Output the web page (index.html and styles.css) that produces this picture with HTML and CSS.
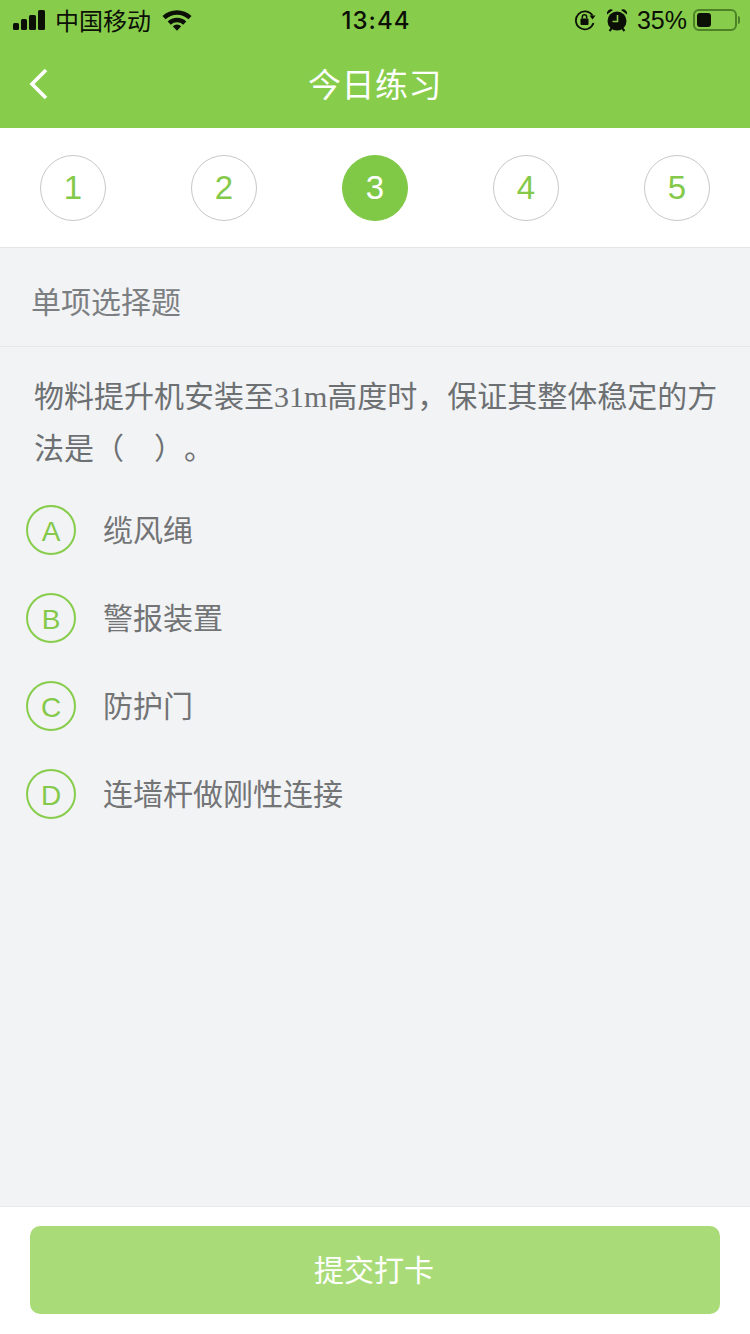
FILE: index.html
```html
<!DOCTYPE html>
<html>
<head>
    <title>今日练习</title>
    <link rel="stylesheet" href="styles.css">
</head>
<body>
    <div class="page">
        <div class="status-bar">
            <div class="status-left">
                <svg class="signal" width="34" height="20" viewBox="0 0 34 20">
                    <rect x="1" y="13" width="6" height="7" rx="1.500"/>
                    <rect x="9" y="9" width="6" height="11" rx="1.500"/>
                    <rect x="17" y="5" width="7" height="15" rx="1.500"/>
                    <rect x="26" y="0" width="7" height="20" rx="1.500"/>
                </svg>
                <span class="carrier">中国移动</span>
                <svg class="wifi" width="30" height="22" viewBox="0 0 30 22">
                    <path d="M0.500 7a21 21 0 0 1 29 0l-3 3.300a16.500 16.500 0 0 0-23 0z"/>
                    <path d="M5.700 12.500a13.500 13.500 0 0 1 18.600 0l-3.100 3.200a9 9 0 0 0-12.400 0z"/>
                    <path d="M10.800 17.200a6.200 6.200 0 0 1 8.400 0l-4.200 4.600z"/>
                </svg>
            </div>
            <div class="status-time">13:44</div>
            <div class="status-right">
                <svg class="rotate-lock" width="22" height="22" viewBox="0 0 22 22">
                    <path d="M18.500 6.500A9 9 0 1 0 19.500 14" fill="none" stroke="#0b0f06" stroke-width="1.800"/>
                    <path d="M15.500 6.500h6l-3 4z"/>
                    <rect x="6.500" y="9.500" width="8" height="6.500" rx="1"/>
                    <path d="M8.300 9.500V8a2.200 2.200 0 0 1 4.400 0v1.500" fill="none" stroke="#0b0f06" stroke-width="1.500"/>
                </svg>
                <svg class="alarm" width="22" height="24" viewBox="0 0 22 24">
                    <circle cx="11" cy="13" r="9.500"/>
                    <path d="M1 6.500a4 4 0 0 1 6-4.500zM21 6.500a4 4 0 0 0-6-4.500z"/>
                    <path d="M3.500 23l2.500-3M18.500 23l-2.500-3" stroke="#0b0f06" stroke-width="2"/>
                    <path d="M11.500 7v6.500H6.500" fill="none" stroke="#87cd4b" stroke-width="1.600"/>
                </svg>
                <span class="battery-text">35%</span>
                <div class="battery">
                    <div class="battery-level"></div>
                </div>
                <div class="battery-cap"></div>
            </div>
        </div>

        <div class="nav-bar">
            <svg class="back" width="20" height="32" viewBox="0 0 20 32">
                <path d="M17 2L3 16l14 14" fill="none" stroke="#fff" stroke-width="3.600"/>
            </svg>
            <h1 class="nav-title">今日练习</h1>
        </div>

        <div class="steps">
            <div class="step">1</div>
            <div class="step">2</div>
            <div class="step active">3</div>
            <div class="step">4</div>
            <div class="step">5</div>
        </div>

        <div class="content">
            <div class="section-title">单项选择题</div>
            <p class="question">物料提升机安装至<span class="latin">31m</span>高度时，保证其整体稳定的方法是（<span class="blank"></span>）。</p>
            <div class="options">
                <div class="option"><span class="option-key">A</span><span class="option-text">缆风绳</span></div>
                <div class="option"><span class="option-key">B</span><span class="option-text">警报装置</span></div>
                <div class="option"><span class="option-key">C</span><span class="option-text">防护门</span></div>
                <div class="option"><span class="option-key">D</span><span class="option-text">连墙杆做刚性连接</span></div>
            </div>
        </div>

        <div class="footer">
            <button class="submit-button">提交打卡</button>
        </div>
    </div>
</body>
</html>
```
FILE: styles.css
```css
* {
    box-sizing: border-box;
}
body {
    margin: 0;
    font-family: "Liberation Sans", "Noto Sans CJK SC", sans-serif;
}
.page {
    display: flex;
    flex-direction: column;
    width: 750px;
    height: 1334px;
    overflow: hidden;
    background-color: #f2f3f5;
}

/* status bar */
.status-bar {
    display: flex;
    align-items: center;
    justify-content: space-between;
    height: 40px;
    padding: 0 10px 0 12px;
    background-color: #87cd4b;
    color: #0b0f06;
    font-size: 25px;
}
.status-bar svg {
    fill: #0b0f06;
    flex-shrink: 0;
}
.status-left,
.status-right {
    display: flex;
    align-items: center;
    width: 240px;
}
.status-right {
    justify-content: flex-end;
}
.carrier {
    margin-left: 9px;
    font-family: "Noto Sans CJK SC", sans-serif;
    font-size: 24px;
    line-height: 40px;
}
.wifi {
    margin-left: 11px;
}
.status-time {
    font-family: "Inter", "Liberation Sans", sans-serif;
    font-size: 24px;
    font-weight: 500;
    letter-spacing: 1px;
}
.rotate-lock {
    margin-right: 10px;
}
.alarm {
    margin-right: 9px;
}
.battery-text {
    margin-right: 6px;
}
.battery {
    width: 44px;
    height: 22px;
    padding: 2px;
    border: 2px solid #4d8227;
    border-radius: 6px;
}
.battery-level {
    width: 14px;
    height: 100%;
    border-radius: 3px;
    background-color: #0b0f06;
}
.battery-cap {
    width: 2px;
    height: 8px;
    margin-left: 1px;
    border-radius: 0 2px 2px 0;
    background-color: #4d8227;
}

/* nav */
.nav-bar {
    position: relative;
    display: flex;
    align-items: center;
    justify-content: center;
    height: 88px;
    padding-bottom: 3px;
    background-color: #87cd4b;
}
.back {
    position: absolute;
    left: 29px;
    top: 28px;
}
.nav-title {
    margin: 0;
    color: #fff;
    font-family: "Noto Sans CJK SC", sans-serif;
    font-size: 33px;
    font-weight: 400;
    letter-spacing: 0.500px;
}

/* steps */
.steps {
    display: flex;
    align-items: center;
    justify-content: space-between;
    height: 120px;
    padding: 0 40px;
    background-color: #fff;
    border-bottom: 1px solid #e6e6e6;
}
.step {
    display: flex;
    align-items: center;
    justify-content: center;
    width: 66px;
    height: 66px;
    border: 1px solid #c8c8c8;
    border-radius: 50%;
    color: #84c94a;
    font-size: 33px;
}
.step.active {
    border-color: #80c947;
    background-color: #80c947;
    color: #fff;
}

/* question */
.content {
    flex: 1;
}
.section-title {
    height: 99px;
    padding-left: 31px;
    border-bottom: 1px solid #e6e7e9;
    color: #7c7f82;
    font-family: "Noto Sans CJK SC", sans-serif;
    font-size: 30px;
    line-height: 104px;
}
.question {
    margin: 0;
    padding: 21px 30px 0 34px;
    color: #6d7072;
    font-family: "Noto Sans CJK SC", sans-serif;
    font-size: 30px;
    line-height: 52px;
    text-spacing-trim: space-all;
}
.latin {
    font-family: "Liberation Serif", serif;
    line-height: 1;
}
.blank {
    display: inline-block;
    width: 30px;
}
.options {
    display: flex;
    flex-direction: column;
    gap: 38px;
    padding: 33px 0 0 26px;
}
.option {
    display: flex;
    align-items: center;
    height: 50px;
    color: #727476;
    font-family: "Noto Sans CJK SC", sans-serif;
    font-size: 30px;
}
.option-key {
    display: flex;
    align-items: center;
    justify-content: center;
    width: 50px;
    height: 50px;
    margin-right: 27px;
    padding-top: 3px;
    border: 2px solid #87cd4b;
    border-radius: 50%;
    color: #84c94a;
    font-family: "Liberation Sans", sans-serif;
    font-size: 28px;
}
.option-text {
    padding-bottom: 5px;
}

/* footer */
.footer {
    height: 128px;
    padding: 19px 30px 0;
    background-color: #fff;
    border-top: 1px solid #e8e9ec;
}
.submit-button {
    display: block;
    width: 100%;
    height: 88px;
    padding: 0 2px 4px 0;
    border: none;
    border-radius: 10px;
    background-color: #a9dc78;
    color: #fff;
    font-family: "Noto Sans CJK SC", sans-serif;
    font-size: 30px;
}
```
